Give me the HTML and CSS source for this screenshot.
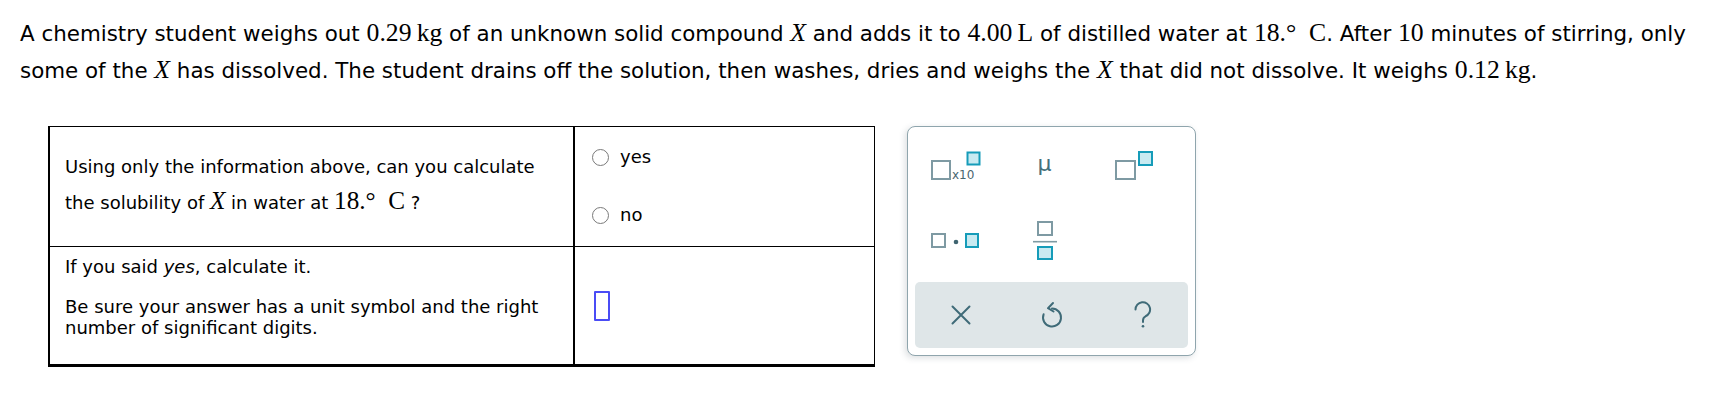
FILE: index.html
```html
<!DOCTYPE html>
<html>
<head>
<meta charset="utf-8">
<link rel="stylesheet" href="styles.css">
</head>
<body>
<div class="page">
  <p class="intro">A chemistry student weighs out <span class="m">0.29&thinsp;kg</span> of an unknown solid compound <span class="m mi">X</span> and adds it to <span class="m">4.00&thinsp;L</span> of distilled water at <span class="m">18.°&ensp;C</span>. After <span class="m">10</span> minutes of stirring, only<br>some of the <span class="m mi">X</span> has dissolved. The student drains off the solution, then washes, dries and weighs the <span class="m mi">X</span> that did not dissolve. It weighs <span class="m">0.12&thinsp;kg</span>.</p>

  <div class="work">
    <div class="qgrid">
      <div class="cell q1">
        <p>Using only the information above, can you calculate<br>the solubility of <span class="m2 mi">X</span> in water at <span class="m2">18.°&ensp;C</span> ?</p>
      </div>
      <div class="cell a1">
        <label class="radio"><span class="circle"></span><span>yes</span></label>
        <label class="radio"><span class="circle"></span><span>no</span></label>
      </div>
      <div class="cell q2">
        <p>If you said <i>yes</i>, calculate it.</p>
        <p class="sure">Be sure your answer has a unit symbol and the right<br>number of significant digits.</p>
      </div>
      <div class="cell a2">
        <span class="answer"></span>
      </div>
    </div>

    <div class="panel">
      <div class="keys">
        <div class="key">
          <svg width="52" height="32" viewBox="0 0 52 32">
            <rect x="2" y="11" width="18" height="18" class="g"/>
            <text x="22" y="29" class="x10">x10</text>
            <rect x="37.5" y="2.5" width="12" height="12" class="b"/>
          </svg>
        </div>
        <div class="key"><span class="mu">μ</span></div>
        <div class="key">
          <svg width="40" height="32" viewBox="0 0 40 32">
            <rect x="2" y="11" width="19" height="18" class="g"/>
            <rect x="25" y="2" width="13" height="13" class="b"/>
          </svg>
        </div>
        <div class="key">
          <svg width="52" height="24" viewBox="0 0 52 24">
            <rect x="2" y="6" width="13" height="13" class="g"/>
            <circle cx="26" cy="14" r="2.3" fill="#3f6470"/>
            <rect x="36" y="6" width="12" height="13" class="b"/>
          </svg>
        </div>
        <div class="key">
          <svg width="24" height="42" viewBox="0 0 24 42">
            <rect x="5" y="3" width="14" height="13" class="g"/>
            <line x1="0" y1="22.7" x2="24" y2="22.7" stroke="#7e9aa3" stroke-width="1.6"/>
            <rect x="5" y="28" width="14" height="12" class="b"/>
          </svg>
        </div>
        <div class="key"></div>
      </div>
      <div class="bar">
        <div class="btn">
          <svg width="20" height="20" viewBox="0 0 20 20">
            <path d="M1.5 1.5 L18.5 18.5 M18.5 1.5 L1.5 18.5" class="ic"/>
          </svg>
        </div>
        <div class="btn">
          <svg width="24" height="28" viewBox="0 0 24 28">
            <path d="M12 7.5 A9 9 0 1 1 3.6 13.3" class="ic"/>
            <path d="M13 2 L8 7.2 L13.5 10.5" class="ic"/>
          </svg>
        </div>
        <div class="btn">
          <svg width="22" height="28" viewBox="0 0 22 28">
            <path d="M3.5 8.5 A7.3 7.3 0 1 1 13.5 15.3 C11.7 16.2 11 17.4 11 19.5 L11 21" class="ic"/>
            <circle cx="11" cy="25.2" r="1.3" fill="#3f6b78"/>
          </svg>
        </div>
      </div>
    </div>
  </div>
</div>
</body>
</html>
```

FILE: styles.css
```css
body {
  margin: 0;
  background: #fff;
  color: #000;
  font-family: Verdana, "DejaVu Sans", sans-serif;
}

.page {
  padding: 15px 0 0 20px;
}

.intro {
  margin: 0;
  font-size: 21.4px;
  line-height: 36px;
  white-space: nowrap;
}

.m {
  font-family: "Liberation Serif", "Times New Roman", serif;
  font-size: 1.2em;
}

.m2 {
  font-family: "Liberation Serif", "Times New Roman", serif;
  font-size: 1.4em;
}

.mi {
  font-style: italic;
}

.work {
  display: flex;
  align-items: flex-start;
  gap: 32px;
  margin: 37px 0 0 28px;
}

.qgrid {
  display: grid;
  grid-template-columns: 525px 299px;
  grid-template-rows: 120px 117px;
  border-top: 1px solid #000;
  border-right: 1px solid #000;
  border-left: 2px solid #000;
  border-bottom: 3px solid #000;
  font-size: 18px;
}

.cell {
  box-sizing: border-box;
  display: flex;
  flex-direction: column;
}

.q1, .q2 {
  border-right: 2px solid #000;
}

.q1, .a1 {
  border-bottom: 1px solid #000;
}

.q1 {
  justify-content: center;
  padding: 0 0 4px 15px;
}

.q1 p {
  margin: 0;
  line-height: 34px;
  white-space: nowrap;
}

.a1 {
  justify-content: center;
  gap: 38px;
  padding: 0 0 1px 17px;
}

.radio {
  display: flex;
  align-items: center;
  gap: 11px;
  line-height: 20px;
}

.circle {
  box-sizing: border-box;
  width: 17px;
  height: 17px;
  border: 1px solid #7a7a7a;
  border-radius: 50%;
  background: #fff;
}

.q2 {
  padding: 9px 0 0 15px;
}

.q2 p {
  margin: 0;
  line-height: 21px;
  white-space: nowrap;
}

.q2 .sure {
  margin-top: 19px;
}

.a2 {
  justify-content: center;
  padding-left: 19px;
}

.answer {
  box-sizing: border-box;
  width: 16px;
  height: 30px;
  border: 2px solid #4a4cf5;
  border-radius: 1px;
}

.panel {
  box-sizing: border-box;
  width: 289px;
  padding: 7px;
  border: 1px solid #8fa5ad;
  border-radius: 8px;
  background: #fff;
  box-shadow: -2px 2px 6px rgba(60, 80, 90, 0.18);
}

.keys {
  display: grid;
  grid-template-columns: repeat(3, 89px);
  grid-template-rows: 64px 84px;
  margin-left: -4px;
}

.key {
  display: flex;
  align-items: center;
  justify-content: center;
}

.key svg {
  display: block;
}

.g {
  fill: #fff;
  stroke: #7e9aa3;
  stroke-width: 2;
}

.b {
  fill: #c8eaf1;
  stroke: #169cb9;
  stroke-width: 2;
}

.x10 {
  font-family: "DejaVu Sans", sans-serif;
  font-size: 12px;
  fill: #48666f;
}

.mu {
  font-family: "DejaVu Sans", sans-serif;
  font-size: 22px;
  color: #45707c;
  line-height: 1;
  margin-top: -4px;
}

.bar {
  display: grid;
  grid-template-columns: repeat(3, 1fr);
  height: 66px;
  background: #dfe6e8;
  border-radius: 5px;
}

.btn {
  display: flex;
  align-items: center;
  justify-content: center;
}

.btn svg {
  display: block;
}

.ic {
  fill: none;
  stroke: #3f6b78;
  stroke-width: 2;
  stroke-linecap: round;
  stroke-linejoin: round;
}
```
